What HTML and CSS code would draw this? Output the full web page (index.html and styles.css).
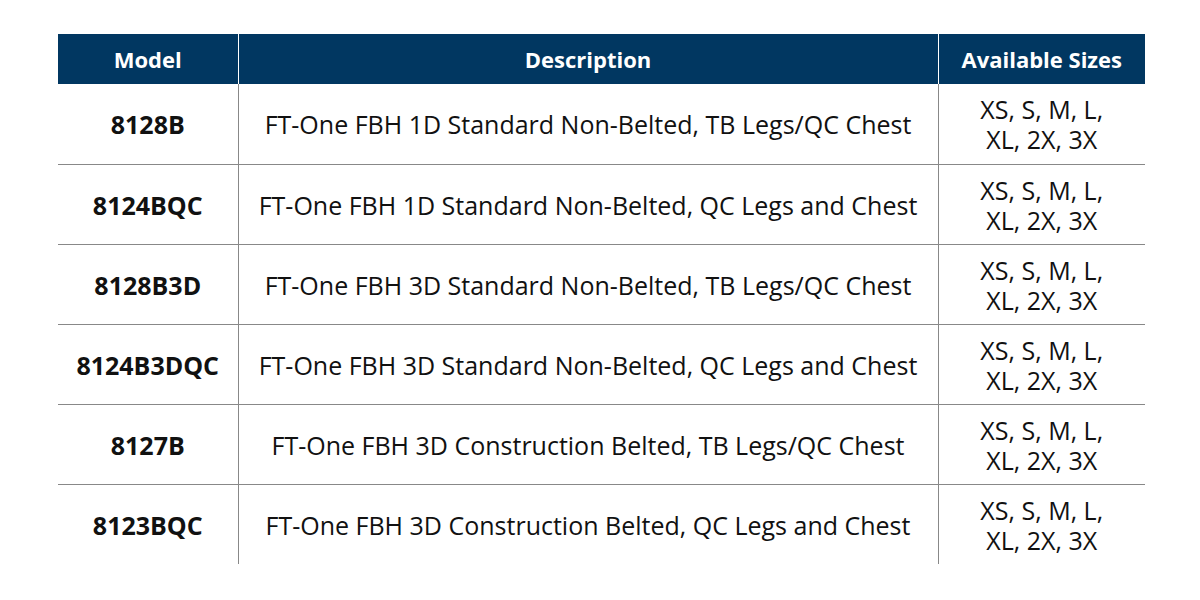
FILE: index.html
```html
<!DOCTYPE html>
<html>
<head>
<meta charset="utf-8">
<link rel="stylesheet" href="styles.css">
</head>
<body>
<div class="wrap">
<table class="spec">
  <colgroup>
    <col class="c-model"><col class="c-desc"><col class="c-size">
  </colgroup>
  <thead>
    <tr><th>Model</th><th>Description</th><th>Available Sizes</th></tr>
  </thead>
  <tbody>
    <tr><td class="model">8128B</td><td>FT-One FBH 1D Standard Non-Belted, TB Legs/QC Chest</td><td class="sizes"><span class="ln">XS, S, M, L,</span><span class="ln">XL, 2X, 3X</span></td></tr>
    <tr><td class="model">8124BQC</td><td>FT-One FBH 1D Standard Non-Belted, QC Legs and Chest</td><td class="sizes"><span class="ln">XS, S, M, L,</span><span class="ln">XL, 2X, 3X</span></td></tr>
    <tr><td class="model">8128B3D</td><td>FT-One FBH 3D Standard Non-Belted, TB Legs/QC Chest</td><td class="sizes"><span class="ln">XS, S, M, L,</span><span class="ln">XL, 2X, 3X</span></td></tr>
    <tr><td class="model">8124B3DQC</td><td>FT-One FBH 3D Standard Non-Belted, QC Legs and Chest</td><td class="sizes"><span class="ln">XS, S, M, L,</span><span class="ln">XL, 2X, 3X</span></td></tr>
    <tr><td class="model">8127B</td><td>FT-One FBH 3D Construction Belted, TB Legs/QC Chest</td><td class="sizes"><span class="ln">XS, S, M, L,</span><span class="ln">XL, 2X, 3X</span></td></tr>
    <tr><td class="model">8123BQC</td><td>FT-One FBH 3D Construction Belted, QC Legs and Chest</td><td class="sizes"><span class="ln">XS, S, M, L,</span><span class="ln">XL, 2X, 3X</span></td></tr>
  </tbody>
</table>
</div>
</body>
</html>
```
FILE: styles.css
```css
html, body { margin: 0; padding: 0; background: #fff; }
body { font-family: "Open Sans", "Noto Sans", sans-serif; color: #111; }
.wrap { padding: 34px 0 0 58px; }
.spec { border-collapse: collapse; table-layout: fixed; width: 1087px; }
.c-model { width: 180px; }
.c-desc { width: 700px; }
.c-size { width: 207px; }
.spec th {
  background: #013761; color: #fff; font-weight: 700; font-size: 22px;
  height: 50px; padding: 0; text-align: center; vertical-align: middle;
  border-left: 1px solid #fff; line-height: 30px;
}
.spec th:first-child { border-left: none; }
.spec td {
  height: 79px; padding: 0; text-align: center; vertical-align: middle;
  font-size: 25px; line-height: 30px; border-left: 1px solid #888;
  border-top: 1px solid #888;
}
.spec tbody tr:first-child td { border-top: none; height: 80px; }
.spec td:first-child { border-left: none; }
.spec td.model { font-weight: 700; }
.sizes .ln { display: block; height: 30px; line-height: 30px; }
```
